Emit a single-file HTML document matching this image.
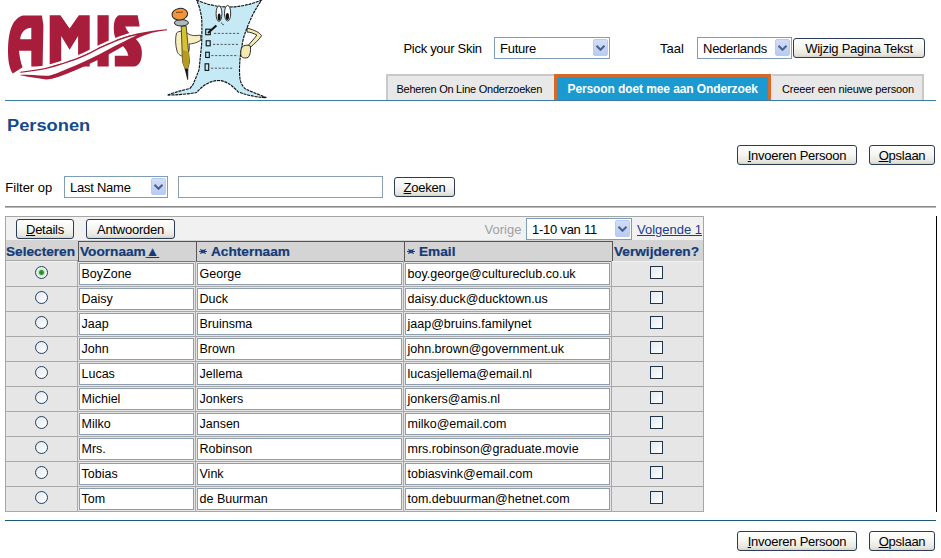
<!DOCTYPE html><html><head><meta charset="utf-8"><style>
*{margin:0;padding:0;box-sizing:border-box}
html,body{width:941px;height:558px;overflow:hidden;background:#fff}
body{position:relative;font-family:"Liberation Sans",sans-serif;color:#000}
.abs{position:absolute}
.t{position:absolute;white-space:nowrap;line-height:15px}
.sel{position:absolute;border:1px solid #7f9db9;background:#fff}
.inp{position:absolute;border:1px solid #8c9db0;background:#fff}
.ddb{position:absolute;width:15px;height:17px;border-radius:2px;background:linear-gradient(#d2def9,#b7cbf3);border:1px solid #b9cbf0;display:flex;align-items:center;justify-content:center}
.btn{position:absolute;letter-spacing:-0.25px;border:1px solid #2a3c57;border-radius:3px;background:linear-gradient(#ffffff 0%,#f5f5f1 50%,#e7e6df 85%,#d8d3c8 100%);text-align:center;white-space:nowrap;color:#000}
.tab{position:absolute;background:#e8e8e8;border-top:2px solid #c9c9c9;border-left:2px solid #c9c9c9}
.atab{position:absolute;background:#1a9ad0;border:3px solid #d26a2c;border-bottom:none}
.radio{position:absolute;width:13px;height:13px;border-radius:50%;border:1px solid #23405e;background:linear-gradient(135deg,#e4e8ee,#ffffff)}
.dot{position:absolute;left:1px;top:1px;width:9px;height:9px;border-radius:50%;background:radial-gradient(circle,#2a802b 0,#3a953a 2px,#bfe9bf 3px,#e6f8e6 4.5px)}
.chk{position:absolute;width:13px;height:13px;border:1px solid #22344a;background:linear-gradient(135deg,#e3e9ee,#ffffff)}
u{text-decoration:underline}
</style></head><body>
<svg class="abs" style="left:0;top:0" width="170" height="100" viewBox="0 0 170 100">
<g fill="#a71d3b">
<path fill-rule="evenodd" d="M23,15.4 L41.9,15.4 L43.4,25 L42.6,66.5 L31.3,66.5 L31.3,50.8 L19,50.8 C19.5,56 20.5,62 22.6,67.2 L12.8,73.6 C9,68 8,60 8,50 C8,38 10,28 14,22 C17,18 20,16 23,15.4 Z M31.3,27.7 C26,27.7 20.6,32 20.2,39.3 L31.3,39.3 Z"/>
<path d="M49.7,15.2 L60.4,15.2 L69.6,28.5 L78.9,15.2 L89.7,15.2 L89.7,66.5 L78.1,66.5 L78.1,36 L69.6,49.8 L61.2,36 L61.2,66.5 L49.7,66.5 Z"/>
<path d="M97.5,15.2 L108.7,15.2 L108.7,66.5 L97.5,66.5 Z"/>
<path d="M119,15.2 L137.7,15.2 L139.7,26.6 L125.2,26.6 C126.5,31 130,34 134,37.5 C140,42 142.5,48 141.8,55 C141.3,61 139.5,65 134.5,66.6 L114.8,66.6 L114.8,55.7 L128.3,55.7 C127.5,51 124.5,47 120,43.5 C115.5,40 113.5,35 113.8,27 C114,20 116,16.5 119,15.2 Z"/>
</g>
<path d="M20.4,70.4 C30,69.5 40,67.7 46,66.5 C57,63.6 67,60.3 77,56.8 C85,53.8 92,49.8 100,45.8 C108,42.3 114,39.3 120,37.3 C126,35.3 132,33.4 137,32.4 C146,30.6 156,29 167,28.1" fill="none" stroke="#fff" stroke-width="2.4"/>
<path d="M20.4,71.7 C30,70.8 40,69 46,67.8 C57,65 67,61.5 77,58 C85,55 92,51 100,47 C108,43.5 114,40.5 120,38.5 C126,36.5 132,34.6 137,33.6 C146,31.8 156,30.2 167,29.3 L167,30.3 C157,31.5 147,33.3 137,38.5 C130,42 125,45 120,48 C112,52.5 106,56 100,59.1 C88,64.5 77,70 67.4,73.5 C58,77 52,79.4 46.3,79.4 C38,78.5 28,76.8 20.4,75.3 Z" fill="#a71d3b"/>
<path d="M19,73 C30,72.1 40,70.3 46,69.1 C57,66.3 67,63 77,59.5 C85,56.5 92,52.5 100,48.5 C108,45 114,42 120,40 C126,38 132,36 137,35.3 C132,37.5 126,40.5 120,43.5 C112,47.5 106,50.5 100,53.9 C88,60 77,65 67.4,68.7 C58,72.5 52,75.8 46.3,75.8 C38,75.3 28,74.9 20.4,74.8 L19,74.8 Z" fill="#fff"/>
</svg>
<svg class="abs" style="left:160px;top:0" width="115" height="100" viewBox="0 0 115 100">
<path d="M36.5,0 Q68,14 101.7,0 C96,8 92,16 90.3,20 C86,30 83,38 82.3,44.2 C80,55 79.5,65 79.5,69.4 C79.5,76 80,80 80.7,81.7 C82,85 84,88 85.6,89 C92,92 100,95 106.4,97.6 C98,97.5 90,96 78.2,92 C72,85 65,80.5 58.7,80.5 C50,80.5 42,86 36.7,92.5 C30,94 15,95 7.3,95.1 C15,92 24,90 30,88.4 C33,85 34,83 34.2,81.7 C37,75 39,70 39.1,69.4 C40,60 41,50 41.6,45 C42,30 42,22 41.6,18 C40.5,10 38.5,4 36.5,0 Z" fill="#c6e9f6" stroke="#111" stroke-width="1.15" stroke-dasharray="3 0.8"/>
<path d="M87.1,28.1 C95,30 100,33 101.6,35.7 C99,40 94,44 90.3,47.4 L87.9,45.8 C91,42 95,38 96.8,35 C94,33.5 90,32 87,32 Z" fill="#f4eab0" stroke="#1a1a1a" stroke-width="0.9"/>
<path d="M82,47 C84,45 88,44.5 90.3,46 C91,50 90.5,55 88,57.5 C85,58.5 81.5,58 80.8,55 C80.5,52 81,49 82,47 Z" fill="#f4eab0" stroke="#1a1a1a" stroke-width="0.9"/>
<ellipse cx="59" cy="13.6" rx="2.9" ry="7.8" fill="#fff" stroke="#1a1a1a" stroke-width="0.9"/>
<ellipse cx="67.6" cy="13.2" rx="3.1" ry="7.8" fill="#fff" stroke="#1a1a1a" stroke-width="0.9"/>
<ellipse cx="59.2" cy="17" rx="1.5" ry="3.6" fill="#111"/>
<ellipse cx="67.4" cy="16.5" rx="1.6" ry="3.6" fill="#111"/>
<path d="M61.5,22.5 C62,24.5 63,25 64,24.5" fill="none" stroke="#222" stroke-width="0.8"/>
<g fill="none" stroke="#111" stroke-width="1.1">
<rect x="45.7" y="29.2" width="4.6" height="5.5"/>
<rect x="46.2" y="40.8" width="4" height="5"/>
<rect x="45.7" y="52.2" width="3.6" height="5.3"/>
<rect x="45.1" y="63.8" width="3.6" height="6.6"/>
</g>
<path d="M48,33 L56.4,25.5" fill="none" stroke="#111" stroke-width="2"/>
<g stroke="#333" stroke-width="0.8" stroke-dasharray="2.2 1.6">
<path d="M54,33.4 L80,33.4"/><path d="M53,44.4 L79,44.4"/><path d="M51.3,55.6 L78.2,55.6"/><path d="M51,68.2 L73,68.2"/>
</g>
<path d="M16.5,33 C19,30.5 24,31 27,33 C31,36 36,36 40.5,35 L41,40 C37,43 32,44 29,44 C30,48 29,53 26,56 C22,57 18,55 17,51 C15.5,46 15,38 16.5,33 Z" fill="#f6eec0" stroke="#1a1a1a" stroke-width="0.8"/>
<path d="M21.2,26 L26.2,26 L29.5,62 L27.5,70 L25.5,70 L22.5,62 Z" fill="#d6c22e" stroke="#2a2a2a" stroke-width="0.8"/>
<path d="M23,50 L28.8,52 L29.3,62 L27.5,70 L25.5,70 L22.5,62 Z" fill="#b89a22"/>
<path d="M25.2,69 L27.8,69 L27.7,79.5 Z" fill="#111" stroke="#111" stroke-width="0.8"/>
<ellipse cx="21.4" cy="22.8" rx="7" ry="3.2" fill="#aab8c0" stroke="#222" stroke-width="1"/>
<ellipse cx="19.8" cy="14.2" rx="7.8" ry="5.8" fill="#f0953a" stroke="#222" stroke-width="1" transform="rotate(-8 19.8 14.2)"/>
<path d="M16,12.5 L23,12" stroke="#7a3a10" stroke-width="0.9"/>
</svg>
<div class="t" style="left:403.5px;top:41.00px;font-size:13px;line-height:15px;letter-spacing:-0.3px">Pick your Skin</div>
<div class="sel" style="left:494px;top:37px;width:116px;height:22px"></div><div class="t" style="left:500px;top:41px;font-size:13px;letter-spacing:-0.25px">Future</div><div class="ddb" style="left:593px;top:39px"><svg width="9" height="6" viewBox="0 0 9 6"><path d="M0.5 0.8 L4.5 4.8 L8.5 0.8" fill="none" stroke="#4d6185" stroke-width="2"/></svg></div>
<div class="t" style="left:660px;top:41.00px;font-size:13px;line-height:15px;">Taal</div>
<div class="sel" style="left:697px;top:37px;width:95px;height:22px"></div><div class="t" style="left:703px;top:41px;font-size:13px;letter-spacing:-0.25px">Nederlands</div><div class="ddb" style="left:775px;top:39px"><svg width="9" height="6" viewBox="0 0 9 6"><path d="M0.5 0.8 L4.5 4.8 L8.5 0.8" fill="none" stroke="#4d6185" stroke-width="2"/></svg></div>
<div class="btn" style="left:793px;top:38px;width:132px;height:20px;line-height:20px;font-size:13px">Wijzig Pagina Tekst</div>
<div class="tab" style="left:386px;top:74px;width:168px;height:26px"></div>
<div class="t" style="left:396.5px;top:83.29px;font-size:11px;line-height:13px;letter-spacing:-0.25px">Beheren On Line Onderzoeken</div>
<div class="atab" style="left:554px;top:74px;width:217px;height:26px"></div>
<div class="t" style="left:567.5px;top:82.44px;font-size:12px;line-height:14px;font-weight:bold;color:#fff;letter-spacing:-0.1px">Persoon doet mee aan Onderzoek</div>
<div class="tab" style="left:771px;top:74px;width:153px;height:26px;border-right:2px solid #c8c8c8;border-left-color:#e2e2e2"></div>
<div class="t" style="left:782px;top:83.29px;font-size:11px;line-height:13px;letter-spacing:-0.15px">Creeer een nieuwe persoon</div>
<div class="abs" style="left:5px;top:100px;width:931px;height:1px;background:#3b7fa3"></div>
<div class="t" style="left:7px;top:117.36px;font-size:16px;line-height:18px;font-weight:bold;color:#174a8b;transform:scaleX(1.142);transform-origin:0 0">Personen</div>
<div class="btn" style="left:737px;top:145px;width:120px;height:20px;line-height:20px;font-size:13px"><u>I</u>nvoeren Persoon</div>
<div class="btn" style="left:869px;top:145px;width:66px;height:20px;line-height:20px;font-size:13px"><u>O</u>pslaan</div>
<div class="t" style="left:5.3px;top:180.00px;font-size:13px;line-height:15px;">Filter op</div>
<div class="sel" style="left:64px;top:176px;width:104px;height:22px"></div><div class="t" style="left:70px;top:180px;font-size:13px;letter-spacing:-0.25px">Last Name</div><div class="ddb" style="left:151px;top:178px"><svg width="9" height="6" viewBox="0 0 9 6"><path d="M0.5 0.8 L4.5 4.8 L8.5 0.8" fill="none" stroke="#4d6185" stroke-width="2"/></svg></div>
<div class="inp" style="left:178px;top:176px;width:205px;height:22px"></div>
<div class="btn" style="left:394px;top:177px;width:61px;height:20px;line-height:20px;font-size:13px"><u>Z</u>oeken</div>
<div class="abs" style="left:5px;top:206px;width:931px;height:1px;background:#8a8a8a"></div>
<div class="abs" style="left:5px;top:207px;width:931px;height:1px;background:#b8b8b8"></div>
<div class="abs" style="left:5px;top:216px;width:699px;height:296px;background:#f1f1f1;border:1px solid #a6a6a6"></div>
<div class="abs" style="left:936px;top:216px;width:1px;height:296px;background:#000"></div>
<div class="btn" style="left:16px;top:219px;width:58px;height:20px;line-height:20px;font-size:13px"><u>D</u>etails</div>
<div class="btn" style="left:86px;top:219px;width:89px;height:20px;line-height:20px;font-size:13px">Antwoorden</div>
<div class="t" style="left:484.5px;top:222.00px;font-size:13px;line-height:15px;color:#a0a0a0">Vorige</div>
<div class="sel" style="left:526px;top:218px;width:106px;height:22px"></div><div class="t" style="left:532px;top:222px;font-size:13px;letter-spacing:-0.25px">1-10 van 11</div><div class="ddb" style="left:615px;top:220px"><svg width="9" height="6" viewBox="0 0 9 6"><path d="M0.5 0.8 L4.5 4.8 L8.5 0.8" fill="none" stroke="#4d6185" stroke-width="2"/></svg></div>
<div class="t" style="left:637px;top:222.00px;font-size:13px;line-height:15px;color:#1f3b8f"><u>Volgende 1</u></div>
<div class="abs" style="left:6px;top:240px;width:697px;height:21px;background:#d4d4d4"></div>
<div class="abs" style="left:6px;top:260px;width:72px;height:1px;background:#a8a8a8"></div>
<div class="abs" style="left:78px;top:241px;width:534px;height:1px;background:#555"></div>
<div class="abs" style="left:78px;top:261px;width:534px;height:1px;background:#777"></div>
<div class="abs" style="left:78px;top:241px;width:1px;height:20px;background:#555"></div>
<div class="abs" style="left:196px;top:241px;width:1px;height:20px;background:#555"></div>
<div class="abs" style="left:404px;top:241px;width:1px;height:20px;background:#555"></div>
<div class="abs" style="left:612px;top:241px;width:1px;height:20px;background:#555"></div>
<div class="t" style="left:5.9px;top:243.60px;font-size:13px;line-height:15px;font-weight:bold;color:#133b78;transform:scaleX(1.05);transform-origin:0 0;-webkit-text-stroke:0.2px #133b78">Selecteren</div>
<div class="t" style="left:79.9px;top:243.60px;font-size:13px;line-height:15px;font-weight:bold;color:#133b78;transform:scaleX(1.05);transform-origin:0 0;-webkit-text-stroke:0.2px #133b78">Voornaam<u>▲</u></div>
<svg class="abs" style="left:199px;top:248.9px" width="8" height="5" viewBox="0 0 8 5"><g stroke="#143f80" stroke-width="1.2"><path d="M0,2.5H8M1.3,0.4L6.7,4.6M6.7,0.4L1.3,4.6"/></g><rect x="2.5" y="0.8" width="3" height="3.4" fill="#143f80"/></svg>
<div class="t" style="left:210.6px;top:243.60px;font-size:13px;line-height:15px;font-weight:bold;color:#133b78;transform:scaleX(1.05);transform-origin:0 0;-webkit-text-stroke:0.2px #133b78">Achternaam</div>
<svg class="abs" style="left:407px;top:248.9px" width="8" height="5" viewBox="0 0 8 5"><g stroke="#143f80" stroke-width="1.2"><path d="M0,2.5H8M1.3,0.4L6.7,4.6M6.7,0.4L1.3,4.6"/></g><rect x="2.5" y="0.8" width="3" height="3.4" fill="#143f80"/></svg>
<div class="t" style="left:418.8px;top:243.60px;font-size:13px;line-height:15px;font-weight:bold;color:#133b78;transform:scaleX(1.05);transform-origin:0 0;-webkit-text-stroke:0.2px #133b78">Email</div>
<div class="t" style="left:614.0px;top:243.60px;font-size:13px;line-height:15px;font-weight:bold;color:#133b78;transform:scaleX(1.05);transform-origin:0 0;-webkit-text-stroke:0.2px #133b78">Verwijderen?</div>
<div class="abs" style="left:6px;top:262px;width:697px;height:249px;background:#e6e6e6"></div>
<div class="abs" style="left:6px;top:286px;width:697px;height:1px;background:#a8a8a8"></div>
<div class="abs" style="left:77px;top:261px;width:1px;height:25px;background:#a8a8a8"></div>
<div class="abs" style="left:195px;top:261px;width:1px;height:25px;background:#a8a8a8"></div>
<div class="abs" style="left:403px;top:261px;width:1px;height:25px;background:#a8a8a8"></div>
<div class="abs" style="left:611px;top:261px;width:1px;height:25px;background:#a8a8a8"></div>
<div class="inp" style="left:79px;top:263px;width:115px;height:22px"></div>
<div class="inp" style="left:197px;top:263px;width:205px;height:22px"></div>
<div class="inp" style="left:405px;top:263px;width:205px;height:22px"></div>
<div class="t" style="left:81.5px;top:266.67px;font-size:12.5px;line-height:14px;">BoyZone</div>
<div class="t" style="left:199.5px;top:266.67px;font-size:12.5px;line-height:14px;">George</div>
<div class="t" style="left:407.5px;top:266.67px;font-size:12.5px;line-height:14px;">boy.george@cultureclub.co.uk</div>
<div class="radio" style="left:35px;top:266px"><div class="dot"></div></div>
<div class="chk" style="left:650px;top:266px"></div>
<div class="abs" style="left:6px;top:311px;width:697px;height:1px;background:#a8a8a8"></div>
<div class="abs" style="left:77px;top:286px;width:1px;height:25px;background:#a8a8a8"></div>
<div class="abs" style="left:195px;top:286px;width:1px;height:25px;background:#a8a8a8"></div>
<div class="abs" style="left:403px;top:286px;width:1px;height:25px;background:#a8a8a8"></div>
<div class="abs" style="left:611px;top:286px;width:1px;height:25px;background:#a8a8a8"></div>
<div class="inp" style="left:79px;top:288px;width:115px;height:22px"></div>
<div class="inp" style="left:197px;top:288px;width:205px;height:22px"></div>
<div class="inp" style="left:405px;top:288px;width:205px;height:22px"></div>
<div class="t" style="left:81.5px;top:291.67px;font-size:12.5px;line-height:14px;">Daisy</div>
<div class="t" style="left:199.5px;top:291.67px;font-size:12.5px;line-height:14px;">Duck</div>
<div class="t" style="left:407.5px;top:291.67px;font-size:12.5px;line-height:14px;">daisy.duck@ducktown.us</div>
<div class="radio" style="left:35px;top:291px"></div>
<div class="chk" style="left:650px;top:291px"></div>
<div class="abs" style="left:6px;top:336px;width:697px;height:1px;background:#a8a8a8"></div>
<div class="abs" style="left:77px;top:311px;width:1px;height:25px;background:#a8a8a8"></div>
<div class="abs" style="left:195px;top:311px;width:1px;height:25px;background:#a8a8a8"></div>
<div class="abs" style="left:403px;top:311px;width:1px;height:25px;background:#a8a8a8"></div>
<div class="abs" style="left:611px;top:311px;width:1px;height:25px;background:#a8a8a8"></div>
<div class="inp" style="left:79px;top:313px;width:115px;height:22px"></div>
<div class="inp" style="left:197px;top:313px;width:205px;height:22px"></div>
<div class="inp" style="left:405px;top:313px;width:205px;height:22px"></div>
<div class="t" style="left:81.5px;top:316.67px;font-size:12.5px;line-height:14px;">Jaap</div>
<div class="t" style="left:199.5px;top:316.67px;font-size:12.5px;line-height:14px;">Bruinsma</div>
<div class="t" style="left:407.5px;top:316.67px;font-size:12.5px;line-height:14px;">jaap@bruins.familynet</div>
<div class="radio" style="left:35px;top:316px"></div>
<div class="chk" style="left:650px;top:316px"></div>
<div class="abs" style="left:6px;top:361px;width:697px;height:1px;background:#a8a8a8"></div>
<div class="abs" style="left:77px;top:336px;width:1px;height:25px;background:#a8a8a8"></div>
<div class="abs" style="left:195px;top:336px;width:1px;height:25px;background:#a8a8a8"></div>
<div class="abs" style="left:403px;top:336px;width:1px;height:25px;background:#a8a8a8"></div>
<div class="abs" style="left:611px;top:336px;width:1px;height:25px;background:#a8a8a8"></div>
<div class="inp" style="left:79px;top:338px;width:115px;height:22px"></div>
<div class="inp" style="left:197px;top:338px;width:205px;height:22px"></div>
<div class="inp" style="left:405px;top:338px;width:205px;height:22px"></div>
<div class="t" style="left:81.5px;top:341.67px;font-size:12.5px;line-height:14px;">John</div>
<div class="t" style="left:199.5px;top:341.67px;font-size:12.5px;line-height:14px;">Brown</div>
<div class="t" style="left:407.5px;top:341.67px;font-size:12.5px;line-height:14px;">john.brown@government.uk</div>
<div class="radio" style="left:35px;top:341px"></div>
<div class="chk" style="left:650px;top:341px"></div>
<div class="abs" style="left:6px;top:386px;width:697px;height:1px;background:#a8a8a8"></div>
<div class="abs" style="left:77px;top:361px;width:1px;height:25px;background:#a8a8a8"></div>
<div class="abs" style="left:195px;top:361px;width:1px;height:25px;background:#a8a8a8"></div>
<div class="abs" style="left:403px;top:361px;width:1px;height:25px;background:#a8a8a8"></div>
<div class="abs" style="left:611px;top:361px;width:1px;height:25px;background:#a8a8a8"></div>
<div class="inp" style="left:79px;top:363px;width:115px;height:22px"></div>
<div class="inp" style="left:197px;top:363px;width:205px;height:22px"></div>
<div class="inp" style="left:405px;top:363px;width:205px;height:22px"></div>
<div class="t" style="left:81.5px;top:366.67px;font-size:12.5px;line-height:14px;">Lucas</div>
<div class="t" style="left:199.5px;top:366.67px;font-size:12.5px;line-height:14px;">Jellema</div>
<div class="t" style="left:407.5px;top:366.67px;font-size:12.5px;line-height:14px;">lucasjellema@email.nl</div>
<div class="radio" style="left:35px;top:366px"></div>
<div class="chk" style="left:650px;top:366px"></div>
<div class="abs" style="left:6px;top:411px;width:697px;height:1px;background:#a8a8a8"></div>
<div class="abs" style="left:77px;top:386px;width:1px;height:25px;background:#a8a8a8"></div>
<div class="abs" style="left:195px;top:386px;width:1px;height:25px;background:#a8a8a8"></div>
<div class="abs" style="left:403px;top:386px;width:1px;height:25px;background:#a8a8a8"></div>
<div class="abs" style="left:611px;top:386px;width:1px;height:25px;background:#a8a8a8"></div>
<div class="inp" style="left:79px;top:388px;width:115px;height:22px"></div>
<div class="inp" style="left:197px;top:388px;width:205px;height:22px"></div>
<div class="inp" style="left:405px;top:388px;width:205px;height:22px"></div>
<div class="t" style="left:81.5px;top:391.67px;font-size:12.5px;line-height:14px;">Michiel</div>
<div class="t" style="left:199.5px;top:391.67px;font-size:12.5px;line-height:14px;">Jonkers</div>
<div class="t" style="left:407.5px;top:391.67px;font-size:12.5px;line-height:14px;">jonkers@amis.nl</div>
<div class="radio" style="left:35px;top:391px"></div>
<div class="chk" style="left:650px;top:391px"></div>
<div class="abs" style="left:6px;top:436px;width:697px;height:1px;background:#a8a8a8"></div>
<div class="abs" style="left:77px;top:411px;width:1px;height:25px;background:#a8a8a8"></div>
<div class="abs" style="left:195px;top:411px;width:1px;height:25px;background:#a8a8a8"></div>
<div class="abs" style="left:403px;top:411px;width:1px;height:25px;background:#a8a8a8"></div>
<div class="abs" style="left:611px;top:411px;width:1px;height:25px;background:#a8a8a8"></div>
<div class="inp" style="left:79px;top:413px;width:115px;height:22px"></div>
<div class="inp" style="left:197px;top:413px;width:205px;height:22px"></div>
<div class="inp" style="left:405px;top:413px;width:205px;height:22px"></div>
<div class="t" style="left:81.5px;top:416.67px;font-size:12.5px;line-height:14px;">Milko</div>
<div class="t" style="left:199.5px;top:416.67px;font-size:12.5px;line-height:14px;">Jansen</div>
<div class="t" style="left:407.5px;top:416.67px;font-size:12.5px;line-height:14px;">milko@email.com</div>
<div class="radio" style="left:35px;top:416px"></div>
<div class="chk" style="left:650px;top:416px"></div>
<div class="abs" style="left:6px;top:461px;width:697px;height:1px;background:#a8a8a8"></div>
<div class="abs" style="left:77px;top:436px;width:1px;height:25px;background:#a8a8a8"></div>
<div class="abs" style="left:195px;top:436px;width:1px;height:25px;background:#a8a8a8"></div>
<div class="abs" style="left:403px;top:436px;width:1px;height:25px;background:#a8a8a8"></div>
<div class="abs" style="left:611px;top:436px;width:1px;height:25px;background:#a8a8a8"></div>
<div class="inp" style="left:79px;top:438px;width:115px;height:22px"></div>
<div class="inp" style="left:197px;top:438px;width:205px;height:22px"></div>
<div class="inp" style="left:405px;top:438px;width:205px;height:22px"></div>
<div class="t" style="left:81.5px;top:441.67px;font-size:12.5px;line-height:14px;">Mrs.</div>
<div class="t" style="left:199.5px;top:441.67px;font-size:12.5px;line-height:14px;">Robinson</div>
<div class="t" style="left:407.5px;top:441.67px;font-size:12.5px;line-height:14px;">mrs.robinson@graduate.movie</div>
<div class="radio" style="left:35px;top:441px"></div>
<div class="chk" style="left:650px;top:441px"></div>
<div class="abs" style="left:6px;top:486px;width:697px;height:1px;background:#a8a8a8"></div>
<div class="abs" style="left:77px;top:461px;width:1px;height:25px;background:#a8a8a8"></div>
<div class="abs" style="left:195px;top:461px;width:1px;height:25px;background:#a8a8a8"></div>
<div class="abs" style="left:403px;top:461px;width:1px;height:25px;background:#a8a8a8"></div>
<div class="abs" style="left:611px;top:461px;width:1px;height:25px;background:#a8a8a8"></div>
<div class="inp" style="left:79px;top:463px;width:115px;height:22px"></div>
<div class="inp" style="left:197px;top:463px;width:205px;height:22px"></div>
<div class="inp" style="left:405px;top:463px;width:205px;height:22px"></div>
<div class="t" style="left:81.5px;top:466.67px;font-size:12.5px;line-height:14px;">Tobias</div>
<div class="t" style="left:199.5px;top:466.67px;font-size:12.5px;line-height:14px;">Vink</div>
<div class="t" style="left:407.5px;top:466.67px;font-size:12.5px;line-height:14px;">tobiasvink@email.com</div>
<div class="radio" style="left:35px;top:466px"></div>
<div class="chk" style="left:650px;top:466px"></div>
<div class="abs" style="left:6px;top:511px;width:697px;height:1px;background:#a8a8a8"></div>
<div class="abs" style="left:77px;top:486px;width:1px;height:25px;background:#a8a8a8"></div>
<div class="abs" style="left:195px;top:486px;width:1px;height:25px;background:#a8a8a8"></div>
<div class="abs" style="left:403px;top:486px;width:1px;height:25px;background:#a8a8a8"></div>
<div class="abs" style="left:611px;top:486px;width:1px;height:25px;background:#a8a8a8"></div>
<div class="inp" style="left:79px;top:488px;width:115px;height:22px"></div>
<div class="inp" style="left:197px;top:488px;width:205px;height:22px"></div>
<div class="inp" style="left:405px;top:488px;width:205px;height:22px"></div>
<div class="t" style="left:81.5px;top:491.67px;font-size:12.5px;line-height:14px;">Tom</div>
<div class="t" style="left:199.5px;top:491.67px;font-size:12.5px;line-height:14px;">de Buurman</div>
<div class="t" style="left:407.5px;top:491.67px;font-size:12.5px;line-height:14px;">tom.debuurman@hetnet.com</div>
<div class="radio" style="left:35px;top:491px"></div>
<div class="chk" style="left:650px;top:491px"></div>
<div class="abs" style="left:5px;top:520px;width:931px;height:1px;background:#1f5878"></div>
<div class="btn" style="left:737px;top:531px;width:120px;height:20px;line-height:20px;font-size:13px"><u>I</u>nvoeren Persoon</div>
<div class="btn" style="left:869px;top:531px;width:66px;height:20px;line-height:20px;font-size:13px"><u>O</u>pslaan</div>
</body></html>
